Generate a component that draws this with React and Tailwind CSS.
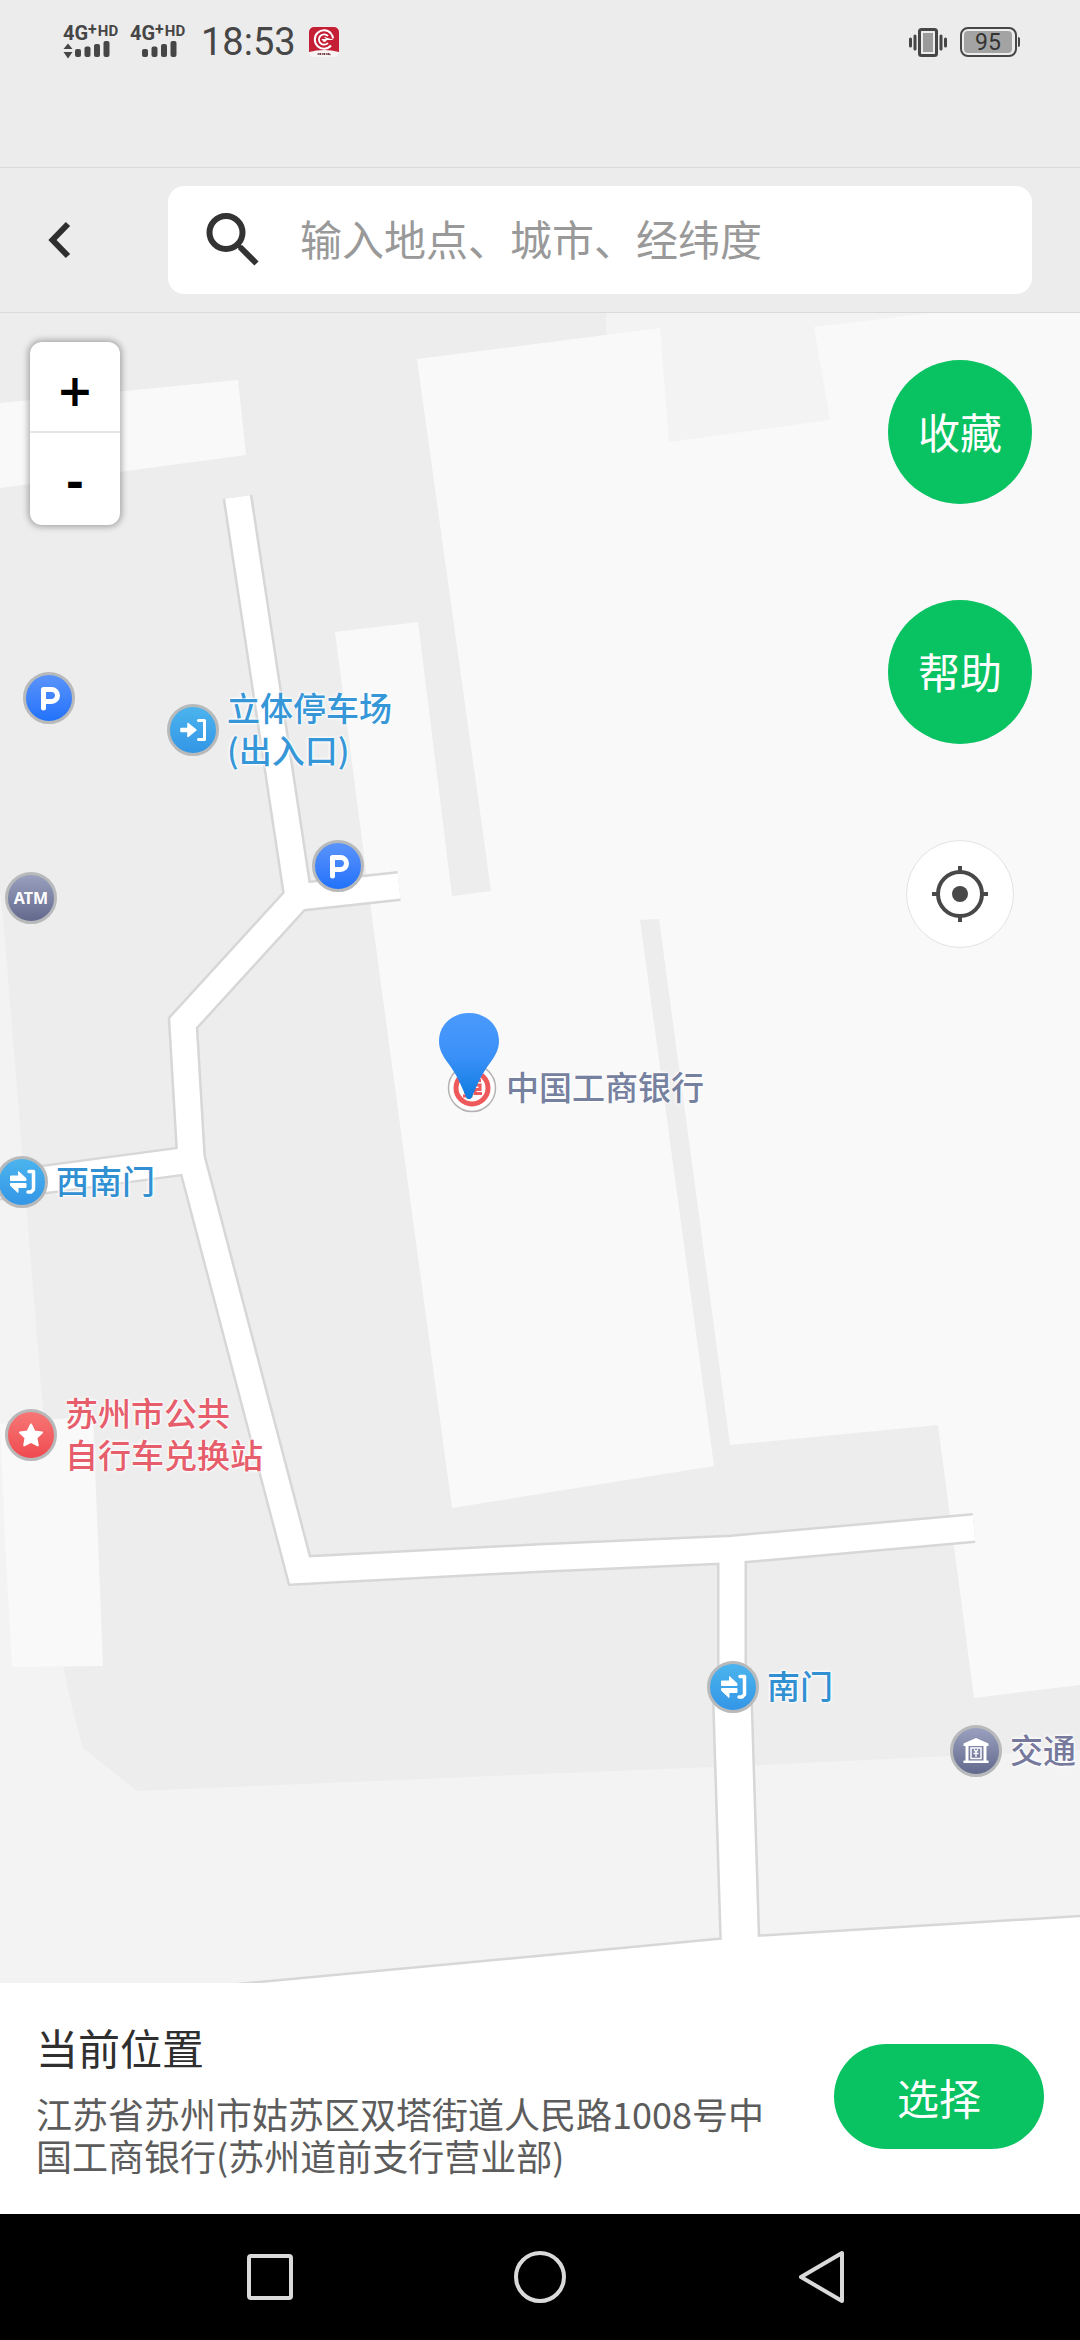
import React from "react";

function SimSignal({ arrows }) {
  return (
    <div className="flex w-[58px] flex-col">
      <div className="flex h-4 items-start whitespace-nowrap font-['Roboto',sans-serif] font-bold text-[#464646]">
        <span className="text-[20px] leading-4">4G</span>
        <span className="text-[16px] leading-[10px]">+</span>
        <span className="pl-px text-[15px] leading-[12px]">HD</span>
      </div>
      <svg viewBox="0 0 58 18" className="h-[18px] w-[58px]" fill="#464646" aria-hidden="true">
        {arrows && <path d="M5 2.5 9.5 8h-9zM5 17.5 9.5 11h-9z" />}
        <rect x="12" y="8" width="6" height="8" rx="2" />
        <rect x="21.500" y="5.500" width="6" height="10.500" rx="2" />
        <rect x="31" y="3" width="6" height="13" rx="2" />
        <rect x="40.500" y="0" width="6" height="16" rx="2" />
      </svg>
    </div>
  );
}

function StatusBar() {
  return (
    <div className="flex h-[168px] items-start justify-between border-b border-[#dadada] pl-[63px] pr-[60px] pt-6">
      <div className="flex h-9 items-center">
        <div className="flex gap-[9px]">
          <SimSignal arrows />
          <SimSignal />
        </div>
        <span className="pl-[13px] font-['Roboto',sans-serif] text-[38px] leading-9 text-[#464646]">18:53</span>
        <svg viewBox="0 0 30 30" className="ml-[13px] h-[30px] w-[30px]" aria-hidden="true">
          <rect width="30" height="30" rx="5" fill="#f8f4f4" />
          <path d="M5 0h20a5 5 0 0 1 5 5v20q-15-4-30 0V5a5 5 0 0 1 5-5z" fill="#c51f36" />
          <path d="M22 6.500a9.200 9.200 0 1 0 0 12" fill="none" stroke="#fff" strokeWidth="2" />
          <path d="M22 6.500q2 2.500 2 5" fill="none" stroke="#fff" strokeWidth="2" />
          <path d="M19 9a5.200 5.200 0 1 0 0 7" fill="none" stroke="#fff" strokeWidth="1.800" />
          <path d="M15.500 10 18 12.500h5.500M18 12.500 15.500 15 13 12.500z" fill="#fff" stroke="#fff" strokeWidth="1" />
          <path d="M8.500 27h2m1-1v2m1.500-1h1.500m1 1v-2m1.500 1h1.500m1 1v-2m1 1.500h1" stroke="#6d3a3f" strokeWidth="1.500" />
        </svg>
      </div>
      <div className="flex h-9 items-center gap-[13px]">
        <svg viewBox="0 0 38 30" className="h-[30px] w-[38px]" aria-hidden="true">
          <rect x="10.500" y="2.500" width="17" height="26" rx="2" fill="none" stroke="#464646" strokeWidth="3" />
          <rect x="14" y="6" width="10" height="19" fill="#9b9b9b" />
          <path d="M6 9v13M32 9v13" stroke="#464646" strokeWidth="3" strokeLinecap="round" />
          <path d="M1.500 12v7M36.500 12v7" stroke="#464646" strokeWidth="3" strokeLinecap="round" />
        </svg>
        <div className="flex items-center gap-px">
          <div className="flex h-[30px] w-[57px] rounded-lg border-2 border-[#464646] p-[2px]">
            <span className="flex w-12 items-center justify-center rounded-[4px] bg-[#a3a3a3] font-['Roboto',sans-serif] text-[23px] leading-none text-[#333]">
              95
            </span>
          </div>
          <span className="h-2.5 w-0.5 rounded-r bg-[#464646]" />
        </div>
      </div>
    </div>
  );
}

function SearchHeader() {
  return (
    <header className="flex h-[145px] items-center border-b border-[#dadada] pr-12">
      <button type="button" aria-label="返回" className="flex h-[108px] w-[168px] shrink-0 items-center pl-12">
        <svg viewBox="0 0 24 38" className="h-[38px] w-6" fill="none" stroke="#2e2e2e" strokeWidth="6" aria-hidden="true">
          <path d="M20 3 4.500 19 20 35" />
        </svg>
      </button>
      <label className="flex h-[108px] min-w-0 flex-1 items-center rounded-2xl bg-white pl-[38px]">
        <svg viewBox="0 0 54 54" className="h-[54px] w-[54px] shrink-0" fill="none" stroke="#333" aria-hidden="true">
          <circle cx="20" cy="19.500" r="16.500" strokeWidth="6" />
          <path d="M34 34 50.500 50.500" strokeWidth="6" />
          <path d="M30 30l6 6" strokeWidth="4" />
        </svg>
        <input
          type="text"
          aria-label="搜索地点"
          placeholder="输入地点、城市、经纬度"
          className="ml-10 min-w-0 flex-1 bg-transparent pb-1 text-[42px] leading-[60px] text-[#333] outline-none placeholder:text-[#999]"
        />
      </label>
    </header>
  );
}

function Roads({ casing }) {
  const color = casing ? "#d7d7d7" : "#ffffff";
  const w = casing ? 30 : 25;
  const wide = casing ? 41 : 36;
  return (
    <g fill="none" stroke={color} strokeWidth={w} strokeLinejoin="miter">
      <path d="M237.500 497 298 897 183 1023 191 1158 299.500 1570.500 540 1558 732 1549.500 974 1528" />
      <path d="M298 897 399 886" />
      <path d="M191 1160-20 1188" />
      <path d="M732 1549 732 1690" />
      <path d="M732 1685 740 1945" strokeWidth={wide} />
      <path
        d="M230 1986 540 1957 740 1938 1100 1916V2020H230z"
        fill={color}
        strokeWidth={casing ? 5 : 0}
      />
    </g>
  );
}

function MapDrawing() {
  return (
    <svg
      viewBox="0 313 1080 1670"
      preserveAspectRatio="xMinYMin slice"
      className="absolute inset-0 h-full w-full"
      aria-hidden="true"
    >
      <rect y="313" width="1080" height="1670" fill="#ededed" />
      <g fill="#f3f3f3">
        <path d="M606 313H1080V460H650L640 340 606 334z" />
        <path d="M0 890 5 940 42 1399 64 1670 72 1707 83 1748 137 1791 540 1774 760 1765 950 1756 1080 1750V1983H0z" />
      </g>
      <g fill="#f9f9f9">
        <path d="M0 403 238 380 246 455 0 488z" />
        <path d="M0 1424 93 1416 98 1540 103 1666 12 1667 5 1540z" />
        <path d="M417 359 660 328 669 442 830 420 814 327 930 313H1080V1685L974 1698 938 1425 730 1445 659 919 640 920 714 1466 452 1508 375 940 335 632 418 622 452 896 491 891z" />
      </g>
      <Roads casing />
      <Roads />
    </svg>
  );
}

function Badge({ className, children }) {
  return (
    <span
      className={
        "flex h-[52px] w-[52px] shrink-0 items-center justify-center rounded-full border-[3px] border-[#b7b9ba] text-white " +
        className
      }
    >
      {children}
    </span>
  );
}

const blue = "bg-linear-to-b from-[#5a93fb] to-[#2072fb]";
const sky = "bg-linear-to-b from-[#4cb4ee] to-[#3396e6]";
const slate = "bg-linear-to-b from-[#9aa1bf] to-[#63698c]";
const red = "bg-linear-to-b from-[#f77676] to-[#ef4a50]";

function Parking() {
  return (
    <svg viewBox="0 0 46 46" className="h-[46px] w-[46px]" fill="none" stroke="#fff" strokeWidth="5" strokeLinejoin="round" strokeLinecap="round" role="img" aria-label="停车场">
      <path d="M17.500 33V14.500h8a6 6 0 0 1 0 12h-7" />
    </svg>
  );
}

function Entrance() {
  return (
    <svg viewBox="0 0 46 46" className="h-[46px] w-[46px]" aria-hidden="true">
      <path d="M11 21.500h7V16.500l8 6.500-8 6.500v-5h-7z" fill="#fff" stroke="#fff" strokeWidth="1.500" strokeLinejoin="round" />
      <path d="M28.500 13.500h6v19h-6" fill="none" stroke="#fff" strokeWidth="3" strokeLinecap="round" strokeLinejoin="round" />
    </svg>
  );
}

function Gate() {
  return (
    <svg viewBox="0 0 46 46" className="h-[46px] w-[46px]" fill="#fff" aria-hidden="true">
      <path d="M11.500 17h8v-4.500l7.500 7v2H11.500zM27 24.500v4h-8v5l-7.500-7v-2z" stroke="#fff" strokeWidth="1" strokeLinejoin="round" />
      <path d="M30 12.500h4.500v18l-2.500 2.500h-3" fill="none" stroke="#fff" strokeWidth="3.500" strokeLinecap="round" strokeLinejoin="round" />
    </svg>
  );
}

function Star() {
  return (
    <svg viewBox="0 0 46 46" className="h-[46px] w-[46px]" aria-hidden="true">
      <path
        d="M23 12.500l3.400 6.900 7.600 1.100-5.500 5.300 1.300 7.600-6.800-3.600-6.800 3.600 1.300-7.600-5.500-5.300 7.600-1.100z"
        fill="#fff"
        stroke="#fff"
        strokeWidth="2"
        strokeLinejoin="round"
      />
    </svg>
  );
}

function BankHouse() {
  return (
    <svg viewBox="0 0 46 46" className="h-[46px] w-[46px]" fill="#fff" aria-hidden="true">
      <path d="M23 10 35.500 15.500v2.500h-25v-2.500zM12.500 18h3v15h-3zM30.500 18h3v15h-3zM10.500 32.500h25V35h-25z" />
      <path d="M18 20h10v10.500H18z" fill="none" stroke="#fff" strokeWidth="1.500" />
      <path d="M21 21.500l2 2.500 2-2.500M23 24v5M20.500 25.500h5" fill="none" stroke="#fff" strokeWidth="1.300" />
    </svg>
  );
}

function IcbcMark() {
  return (
    <svg viewBox="0 0 52 52" className="h-[52px] w-[52px] shrink-0" aria-hidden="true">
      <circle cx="26" cy="26" r="23.500" fill="#fff" stroke="#b4b2b2" strokeWidth="1.500" />
      <circle cx="26" cy="26" r="16" fill="none" stroke="#ee5a5c" strokeWidth="5" />
      <path
        d="M17 18.500h7v4.500h-5M35 18.500h-6V23h5v4.500h-5v4h7M17 34h8v-4h-7M18 27h7"
        fill="none"
        stroke="#ee5a5c"
        strokeWidth="3"
      />
    </svg>
  );
}

function Poi({ className, label, icon }) {
  return (
    <div className={"absolute flex -translate-y-1/2 items-center gap-2 " + className}>
      {icon}
      {label && (
        <span className="whitespace-pre pb-1 text-[33px] font-medium leading-[42px] [text-shadow:0_0_2px_#fff,0_0_3px_#fff,0_0_4px_#fff]">
          {label}
        </span>
      )}
    </div>
  );
}

function MapView() {
  return (
    <main className="relative min-h-[1000px] flex-1 overflow-hidden bg-[#ededed]">
      <MapDrawing />

      <Poi className="left-[23px] top-[385px]" icon={<Badge className={blue}><Parking /></Badge>} />
      <Poi
        className="left-[167px] top-[417px] text-[#3596d8]"
        icon={<Badge className={sky}><Entrance /></Badge>}
        label={"立体停车场\n(出入口)"}
      />
      <Poi className="left-[312px] top-[553px]" icon={<Badge className={blue}><Parking /></Badge>} />
      <Poi
        className="left-[5px] top-[585px]"
        icon={
          <Badge className={slate}>
            <span className="font-['Noto_Sans',sans-serif] text-[16px] font-bold leading-none">ATM</span>
          </Badge>
        }
      />
      <Poi className="left-[446px] top-[775px] text-[#76809f]" icon={<IcbcMark />} label="中国工商银行" />
      <Poi
        className="-left-[4px] top-[869px] text-[#3090d2]"
        icon={<Badge className={sky}><Gate /></Badge>}
        label="西南门"
      />
      <Poi
        className="left-[5px] top-[1122px] text-[#e65d6b]"
        icon={<Badge className={red}><Star /></Badge>}
        label={"苏州市公共\n自行车兑换站"}
      />
      <Poi
        className="left-[707px] top-[1374px] text-[#3090d2]"
        icon={<Badge className={sky}><Gate /></Badge>}
        label="南门"
      />
      <Poi
        className="left-[950px] top-[1438px] text-[#76799c]"
        icon={<Badge className={slate}><BankHouse /></Badge>}
        label="交通"
      />

      <svg viewBox="0 0 60 86" className="absolute left-[439px] top-[700px] h-[86px] w-[60px]" aria-hidden="true">
        <defs>
          <linearGradient id="pinFill" x1="0" y1="0" x2="0" y2="1">
            <stop offset="0" stopColor="#4b9afd" />
            <stop offset="0.500" stopColor="#3b91f8" />
            <stop offset="1" stopColor="#0d7bde" />
          </linearGradient>
        </defs>
        <path d="M30 0C13 0 0 12 0 28c0 9 4 15 9 22 8 10 14 24 18 34 1 3 5 3 6 0 4-10 10-24 18-34 5-7 9-13 9-22C60 12 47 0 30 0z" fill="url(#pinFill)" />
      </svg>

      <div className="absolute left-[30px] top-[29px] flex w-[90px] flex-col divide-y-2 divide-[#e4e4e4] rounded-xl bg-white font-['DejaVu_Sans',sans-serif] text-[44px] font-bold text-black shadow-[0_0_6px_2px_rgba(0,0,0,0.3)]">
        <button type="button" aria-label="放大" className="h-[91px] pt-2">+</button>
        <button type="button" aria-label="缩小" className="h-[92px] pt-2">-</button>
      </div>

      <div className="absolute right-12 top-[47px] flex flex-col items-center gap-24">
        <button type="button" className="h-36 w-36 rounded-full bg-[#09c261] pb-1 text-[42px] text-white">收藏</button>
        <button type="button" className="h-36 w-36 rounded-full bg-[#09c261] pb-1 text-[42px] text-white">帮助</button>
        <button
          type="button"
          aria-label="定位"
          className="flex h-[108px] w-[108px] items-center justify-center rounded-full border border-[#e2e2e2] bg-white"
        >
          <svg viewBox="0 0 56 56" className="h-14 w-14" fill="none" stroke="#484848" aria-hidden="true">
            <circle cx="28" cy="28" r="22" strokeWidth="4" />
            <circle cx="28" cy="28" r="8" fill="#484848" stroke="none" />
            <path d="M28 0v6M28 50v6M0 28h6M50 28h6" strokeWidth="4" />
          </svg>
        </button>
      </div>
    </main>
  );
}

function LocationPanel() {
  return (
    <section className="flex items-center justify-between gap-12 bg-white px-9 pb-[38px] pt-[34px]">
      <div className="min-w-0 max-w-[740px] flex-1">
        <h1 className="text-[42px] leading-[60px] text-[#2f2f2f]">当前位置</h1>
        <p className="mt-[15px] text-[36px] leading-[42px] text-[#5c5c5c]">
          江苏省苏州市姑苏区双塔街道人民路1008号中国工商银行(苏州道前支行营业部)
        </p>
      </div>
      <button type="button" className="h-[105px] w-[210px] shrink-0 rounded-full bg-[#09c261] text-[42px] text-white">
        选择
      </button>
    </section>
  );
}

function NavBar() {
  return (
    <nav className="grid h-[126px] grid-cols-3 items-center justify-items-center bg-black px-[135px]">
      <button type="button" aria-label="最近任务">
        <svg viewBox="0 0 72 56" className="h-14 w-[72px]" fill="none" stroke="#dadada" strokeWidth="4" aria-hidden="true">
          <rect x="15" y="7" width="42" height="42" rx="2" />
        </svg>
      </button>
      <button type="button" aria-label="主屏幕">
        <svg viewBox="0 0 72 56" className="h-14 w-[72px]" fill="none" stroke="#dadada" strokeWidth="4" aria-hidden="true">
          <circle cx="36" cy="28" r="24" />
        </svg>
      </button>
      <button type="button" aria-label="返回上一页">
        <svg viewBox="0 0 72 56" className="h-14 w-[72px]" fill="none" stroke="#dadada" strokeWidth="4" strokeLinejoin="round" aria-hidden="true">
          <path d="M27 28 68 4V52z" />
        </svg>
      </button>
    </nav>
  );
}

export default function App() {
  return (
    <div lang="zh-CN" className="flex min-h-screen flex-col bg-[#ececec] font-['Noto_Sans_CJK_SC',sans-serif]">
      <StatusBar />
      <SearchHeader />
      <MapView />
      <LocationPanel />
      <NavBar />
    </div>
  );
}
